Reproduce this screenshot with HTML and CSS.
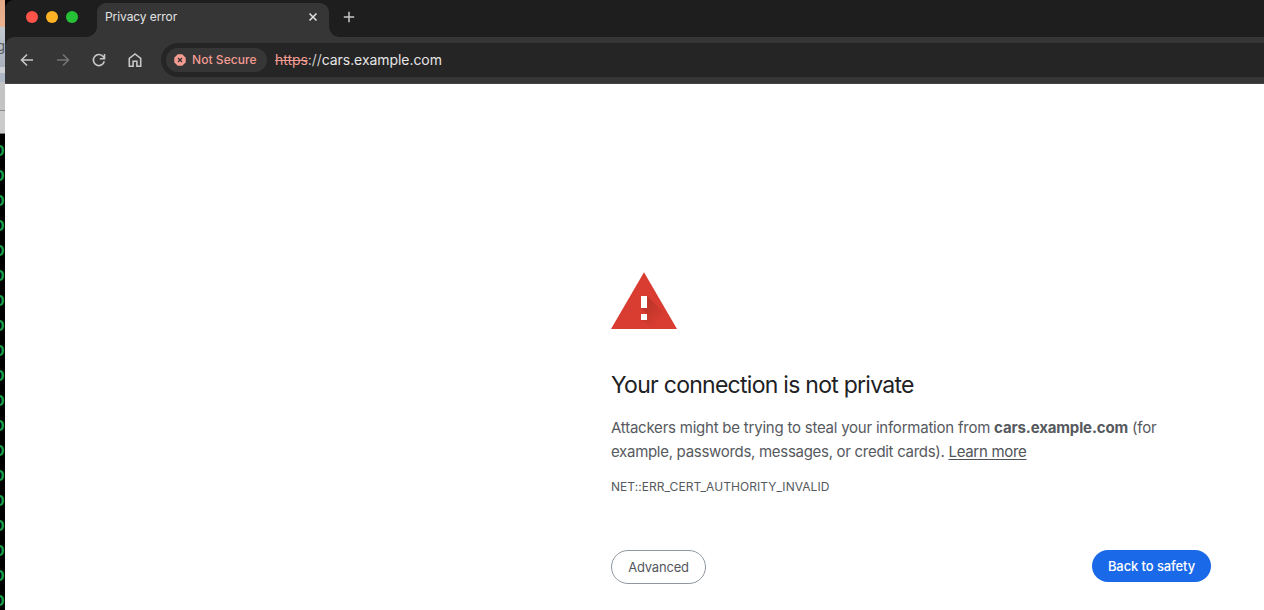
FILE: index.html
```html
<!DOCTYPE html>
<html lang="en">
<head>
<meta charset="utf-8">
<title>Privacy error</title>
<link rel="stylesheet" href="styles.css">
</head>
<body>
<div class="desktop">
  <aside class="behind">
    <div class="wallpaper"></div>
    <div class="pane pane-title"><span>g</span></div>
    <div class="pane pane-light"></div>
    <div class="pane pane-blue"></div>
    <div class="pane pane-grey"></div>
    <div class="pane pane-tab"></div>
    <div class="terminal">
      <span>D</span><span>D</span><span>D</span><span>D</span><span>D</span><span>D</span><span>D</span><span>D</span><span>D</span><span>D</span><span>D</span><span>D</span><span>D</span><span>D</span><span>D</span><span>D</span><span>D</span><span>D</span><span>D</span>
    </div>
  </aside>
  <div class="window">
    <header class="tabstrip">
      <div class="lights"><i class="light red"></i><i class="light yellow"></i><i class="light green"></i></div>
      <div class="tab">
        <span class="tab-title">Privacy error</span>
        <svg class="tab-close" width="10" height="10" viewBox="0 0 10 10"><path d="M1.500 1.500l7 7M8.500 1.500l-7 7"/></svg>
      </div>
      <svg class="new-tab" width="12" height="12" viewBox="0 0 12 12"><path d="M6 .8v10.400M.8 6h10.400"/></svg>
    </header>
    <nav class="toolbar">
      <div class="nav-icons">
        <svg width="16" height="16" viewBox="0 0 16 16"><path d="M14 8H3M8 2.500L2.500 8 8 13.500"/></svg>
        <svg class="disabled" width="16" height="16" viewBox="0 0 16 16"><path d="M2 8h11M8 2.500L13.500 8 8 13.500"/></svg>
        <svg width="16" height="16" viewBox="0 0 16 16"><path d="M13.300 9.300A5.500 5.500 0 1 1 12.300 4.700L13.300 6M13.500 2v4.700H8.800"/></svg>
        <svg width="16" height="16" viewBox="0 0 16 16"><path d="M2.300 14.300V6.300L8 1.900l5.700 4.400v8H9.900V9.200H6.100v5.100z"/></svg>
      </div>
      <div class="omnibox">
        <div class="chip">
          <svg width="12" height="12" viewBox="0 0 12 12"><path class="badge" d="M3.700.3h4.600l3.400 3.400v4.600l-3.400 3.400H3.700L.3 8.300V3.700z"/><path class="cross" d="M4 4l4 4M8 4L4 8"/></svg>
          <span>Not Secure</span>
        </div>
        <div class="url"><s>https</s><span class="sep">://</span>cars.example.com</div>
      </div>
    </nav>
    <main class="page">
      <svg class="warning" width="66" height="57" viewBox="0 0 66 57">
        <defs><linearGradient id="shade" gradientUnits="userSpaceOnUse" x1="34" y1="34" x2="49" y2="49"><stop offset="0" stop-color="#bd352b"/><stop offset="1" stop-color="#d93c30"/></linearGradient></defs>
        <path fill="#d93c30" d="M33 .3L66 57H0z"/>
        <path fill="url(#shade)" d="M36 24L56.500 44.500 64 57H45L30 48l6-6-6-6z"/>
        <path fill="#fff" d="M30 24h6v12h-6zM30 42h6v6h-6z"/>
      </svg>
      <h1>Your connection is not private</h1>
      <p class="message"><span class="line line-one">Attackers might be trying to steal your information from <strong>cars.example.com</strong> (for</span> <span class="line line-two">example, passwords, messages, or credit cards). <a>Learn more</a></span></p>
      <p class="code">NET::ERR_CERT_AUTHORITY_INVALID</p>
      <div class="actions">
        <button class="advanced">Advanced</button>
        <button class="safety">Back to safety</button>
      </div>
    </main>
  </div>
</div>
</body>
</html>
```

FILE: styles.css
```css
* { box-sizing: border-box; }
body { margin: 0; font-family: Inter, "Liberation Sans", sans-serif; background: #fff; }
svg { display: block; flex: none; fill: none; }
.desktop { display: flex; width: 1264px; height: 610px; overflow: hidden; background: #000; }
.behind { width: 5px; flex: none; overflow: hidden; background: #000; }
.wallpaper { height: 27px; background: linear-gradient(#e3a888, #eab391); }
.pane { overflow: hidden; }
.pane-title { height: 40px; background: linear-gradient(#c3c9d1, #abb2bd); }
.pane-title span { display: block; margin: 11px 0 0 -3px; font-size: 13px; line-height: 16px; color: #555a60; }
.pane-light { height: 6px; background: #d0d1d4; }
.pane-blue { height: 9px; background: #aeb7c5; }
.pane-grey { height: 28px; background: #c3c3c3; }
.pane-tab { height: 24px; background: #cbcbcb; border-top: 1px solid #888; border-bottom: 1px solid #777; }
.terminal { padding-top: 5px; }
.terminal span { display: block; height: 25px; margin-left: -5px; font: bold 16px/26px "Liberation Mono", monospace; color: #159f4c; }
.window { flex: 1; min-width: 0; overflow: hidden; border-radius: 9px 0 0; background: linear-gradient(#1e1e1e 0 60px, #fff 60px); }
.tabstrip { display: flex; height: 37px; background: #1e1e1e; }
.lights { display: flex; gap: 8px; padding: 11px 0 0 21px; width: 92px; flex: none; }
.light { width: 12px; height: 12px; border-radius: 50%; }
.red { background: #ff5249; }
.yellow { background: #ffb224; }
.green { background: #25c235; }
.tab { position: relative; display: flex; justify-content: space-between; align-items: center; width: 232px; height: 34px; margin-top: 3px; padding: 0 11px 6px 8px; border-radius: 9px 9px 0 0; background: #363636; }
.tab::before, .tab::after { content: ""; position: absolute; bottom: 0; width: 10px; height: 10px; }
.tab::before { left: -10px; background: radial-gradient(circle at 0 0, transparent 9.500px, #363636 10px); }
.tab::after { right: -10px; background: radial-gradient(circle at 100% 0, transparent 9.500px, #363636 10px); }
.tab-title { font-size: 12px; line-height: 16px; letter-spacing: -.08px; color: #e3e3e3; }
.tab-close { stroke: #dedede; stroke-width: 1.600; }
.new-tab { margin: 11px 0 0 14px; stroke: #c7c7c7; stroke-width: 1.500; }
.toolbar { display: flex; align-items: center; height: 47px; border-radius: 9px 0 0; border-bottom: 1px solid #444; background: #363636; }
.nav-icons { display: flex; gap: 20px; padding-left: 14px; width: 156px; flex: none; stroke: #c7c7c7; stroke-width: 1.600; }
.disabled { stroke: #757575; }
.omnibox { display: flex; align-items: center; flex: 1; height: 34px; padding-left: 5px; border-radius: 17px 0 0 17px; background: #252525; }
.chip { display: flex; align-items: center; gap: 6px; width: 101px; height: 24px; padding-left: 8px; border-radius: 12px; background: #363636; color: #f49c92; font-size: 12px; line-height: 16px; font-weight: 500; letter-spacing: .06px; white-space: nowrap; }
.chip span { padding-bottom: 1px; }
.badge { fill: #f49c92; }
.cross { stroke: #333; stroke-width: 1.300; }
.url { margin-left: 8px; font-size: 14px; line-height: 18px; letter-spacing: -.06px; color: #e6e6e6; white-space: nowrap; }
.url s { color: #f49c92; }
.sep { color: #ccc; }
.page { width: 600px; margin-left: 606px; padding-top: 188px; color: #56595e; }
h1 { margin: 39px 0 0; font-size: 23px; font-weight: 400; line-height: 34px; letter-spacing: -.73px; color: #202124; white-space: nowrap; }
.message { margin: 14px 0 0; font-size: 15px; line-height: 24px; }
.line { display: block; white-space: nowrap; }
.line-one { letter-spacing: -.225px; }
.line-one strong { letter-spacing: -.13px; }
.line-two { letter-spacing: -.295px; }
.message a { color: #505358; text-decoration: underline; text-underline-offset: 2px; }
.code { margin: 13px 0 0; font-size: 12px; line-height: 20px; letter-spacing: .05px; }
.actions { display: flex; justify-content: space-between; align-items: flex-start; margin-top: 53px; }
button { font: 400 13px/18px Inter, sans-serif; padding: 0; white-space: nowrap; }
.advanced { width: 95px; height: 34px; border: 1px solid #9097a0; border-radius: 17px; background: #fff; color: #54585d; letter-spacing: -.2px; }
.safety { width: 119px; height: 32px; border: 0; border-radius: 16px; background: #1a69e8; color: #fff; font-weight: 500; letter-spacing: -.1px; }
```
